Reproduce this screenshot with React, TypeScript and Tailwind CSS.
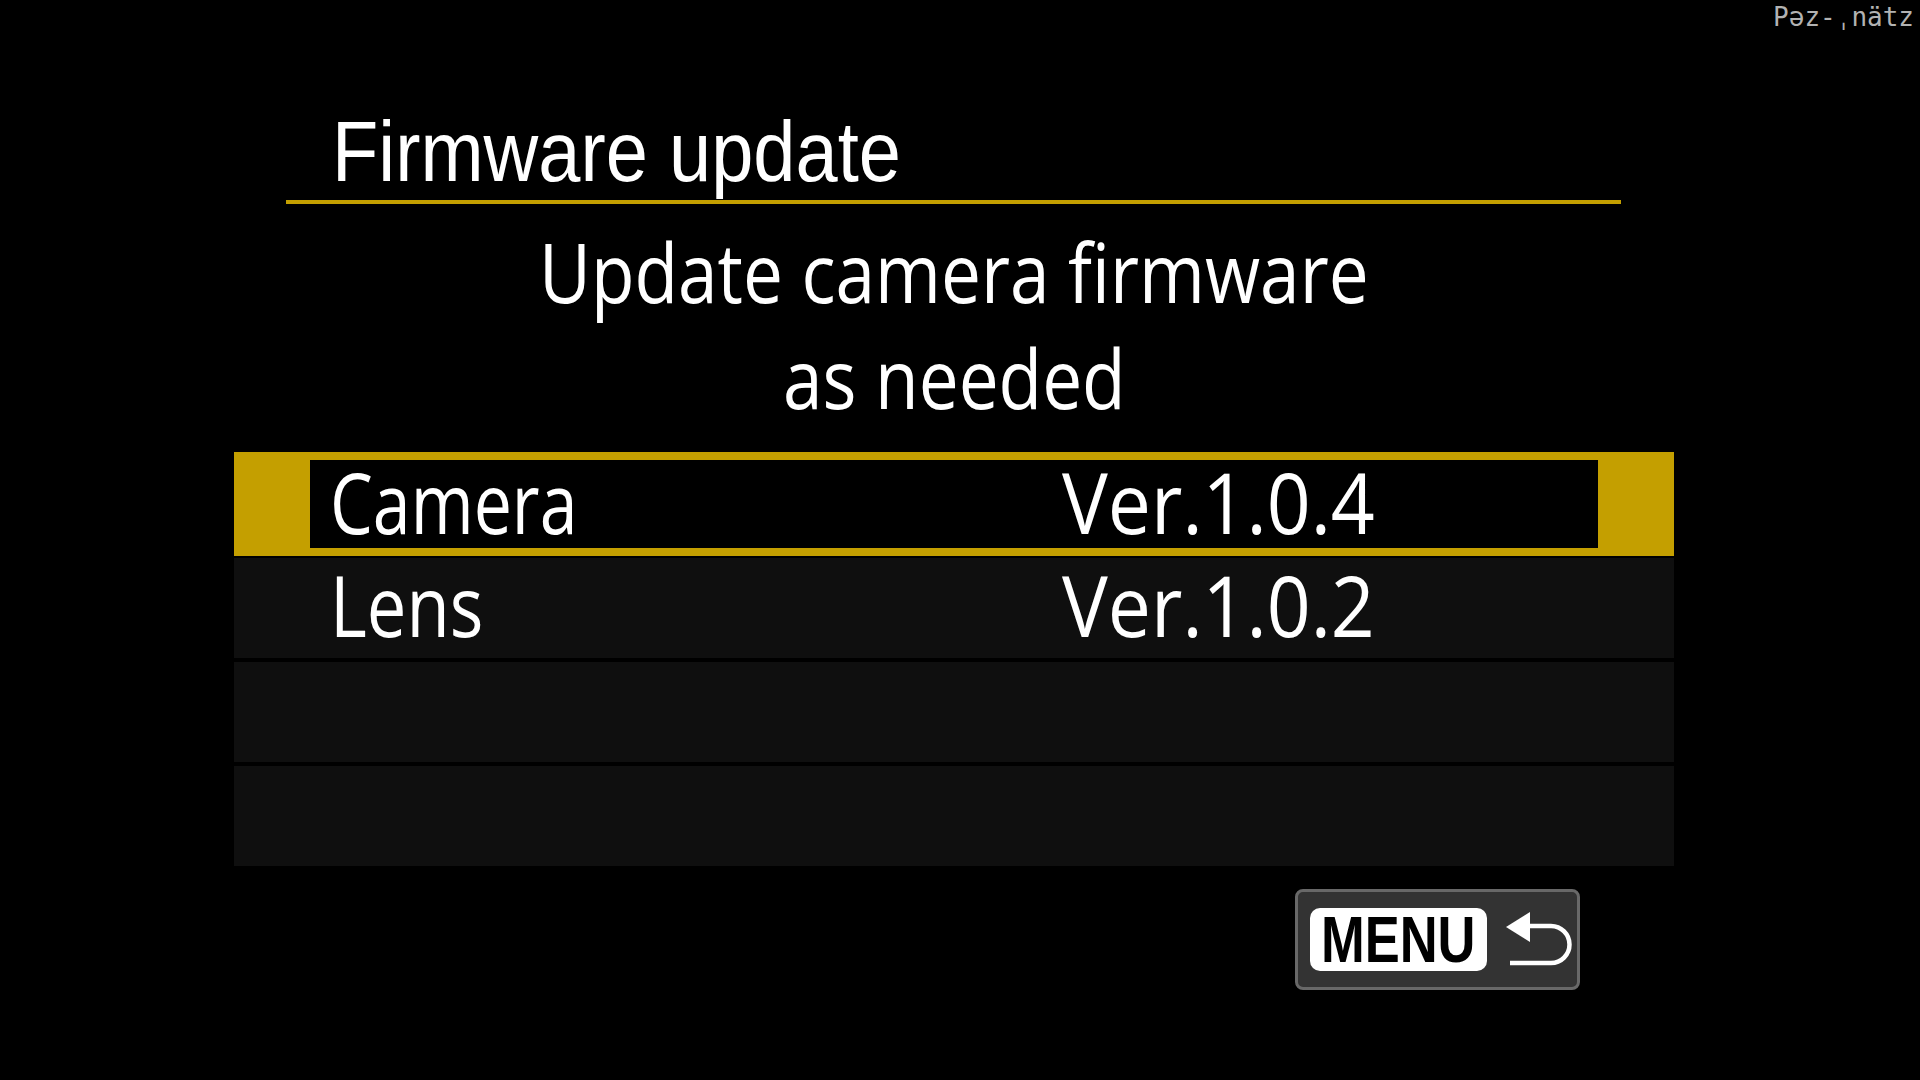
import React from "react";

const sans = { fontFamily: '"Open Sans", "Noto Sans", sans-serif' };
const title = { fontFamily: '"Liberation Sans", Arial, sans-serif' };

function ReturnArrow() {
  return (
    <svg width="68" height="60" viewBox="0 0 68 60" className="block">
      <polygon points="1,17 25,2 25,32" fill="#ffffff" />
      <path d="M24 16 H46 A18.5 18.5 0 0 1 46 53 H5" fill="none" stroke="#ffffff" strokeWidth="4.5" />
    </svg>
  );
}

export default function App() {
  return (
    <div className="relative w-[1920px] h-[1080px] bg-black overflow-hidden text-white">
      <div
        className="absolute top-[1px] right-[6px] text-[26px] leading-[32px] text-[#b2b2b2]"
        style={{ fontFamily: '"DejaVu Sans Mono", monospace' }}
      >
        Pəz-ˌnätz
      </div>

      <div className="flex flex-col ml-[234px] w-[1440px]">
        {/* Title */}
        <div className="mt-[109px] h-[85px] pl-[98px] text-[85px] leading-[85px] whitespace-nowrap" style={title}>
          <span className="inline-block origin-left scale-x-[0.892]">Firmware update</span>
        </div>
        <div className="mt-[6px] ml-[52px] mr-[53px] h-[4px] bg-[#c49f00]" />

        {/* Heading */}
        <div className="mt-[14px] flex flex-col items-center text-[82px] leading-[106px] whitespace-nowrap" style={sans}>
          <span className="inline-block scale-x-[0.868]">Update camera firmware</span>
          <span className="inline-block scale-x-[0.868]">as needed</span>
        </div>

        {/* List */}
        <div className="mt-[22px] flex flex-col" style={sans}>
          <div className="h-[104px] bg-[#c49f00] px-[76px] py-[8px]">
            <div className="h-full bg-black flex items-center pb-[4px] text-[84px] leading-none whitespace-nowrap">
              <span className="w-[752px] pl-[20px]">
                <span className="inline-block origin-left scale-x-[0.81]">Camera</span>
              </span>
              <span>
                <span className="inline-block origin-left scale-x-[0.915]">Ver.1.0.4</span>
              </span>
            </div>
          </div>
          <div className="mt-[2px] h-[100px] bg-[#0f0f0f] pl-[96px] flex items-center pb-[6px] text-[84px] leading-none whitespace-nowrap">
            <span className="w-[732px]">
              <span className="inline-block origin-left scale-x-[0.84]">Lens</span>
            </span>
            <span>
              <span className="inline-block origin-left scale-x-[0.915]">Ver.1.0.2</span>
            </span>
          </div>
          <div className="mt-[4px] h-[100px] bg-[#0f0f0f]" />
          <div className="mt-[4px] h-[100px] bg-[#0f0f0f]" />
        </div>

        {/* MENU button */}
        <div className="mt-[23px] ml-[1061px] w-[285px] h-[101px] rounded-[8px] border-[3px] border-[#686868] bg-[#333333] flex items-center pl-[12px] gap-[18px]">
          <div
            className="w-[177px] h-[63px] rounded-[10px] bg-white text-black flex items-center justify-center text-[64px] leading-none font-bold"
            style={title}
          >
            <span className="inline-block scale-x-[0.82]">MENU</span>
          </div>
          <ReturnArrow />
        </div>
      </div>
    </div>
  );
}
